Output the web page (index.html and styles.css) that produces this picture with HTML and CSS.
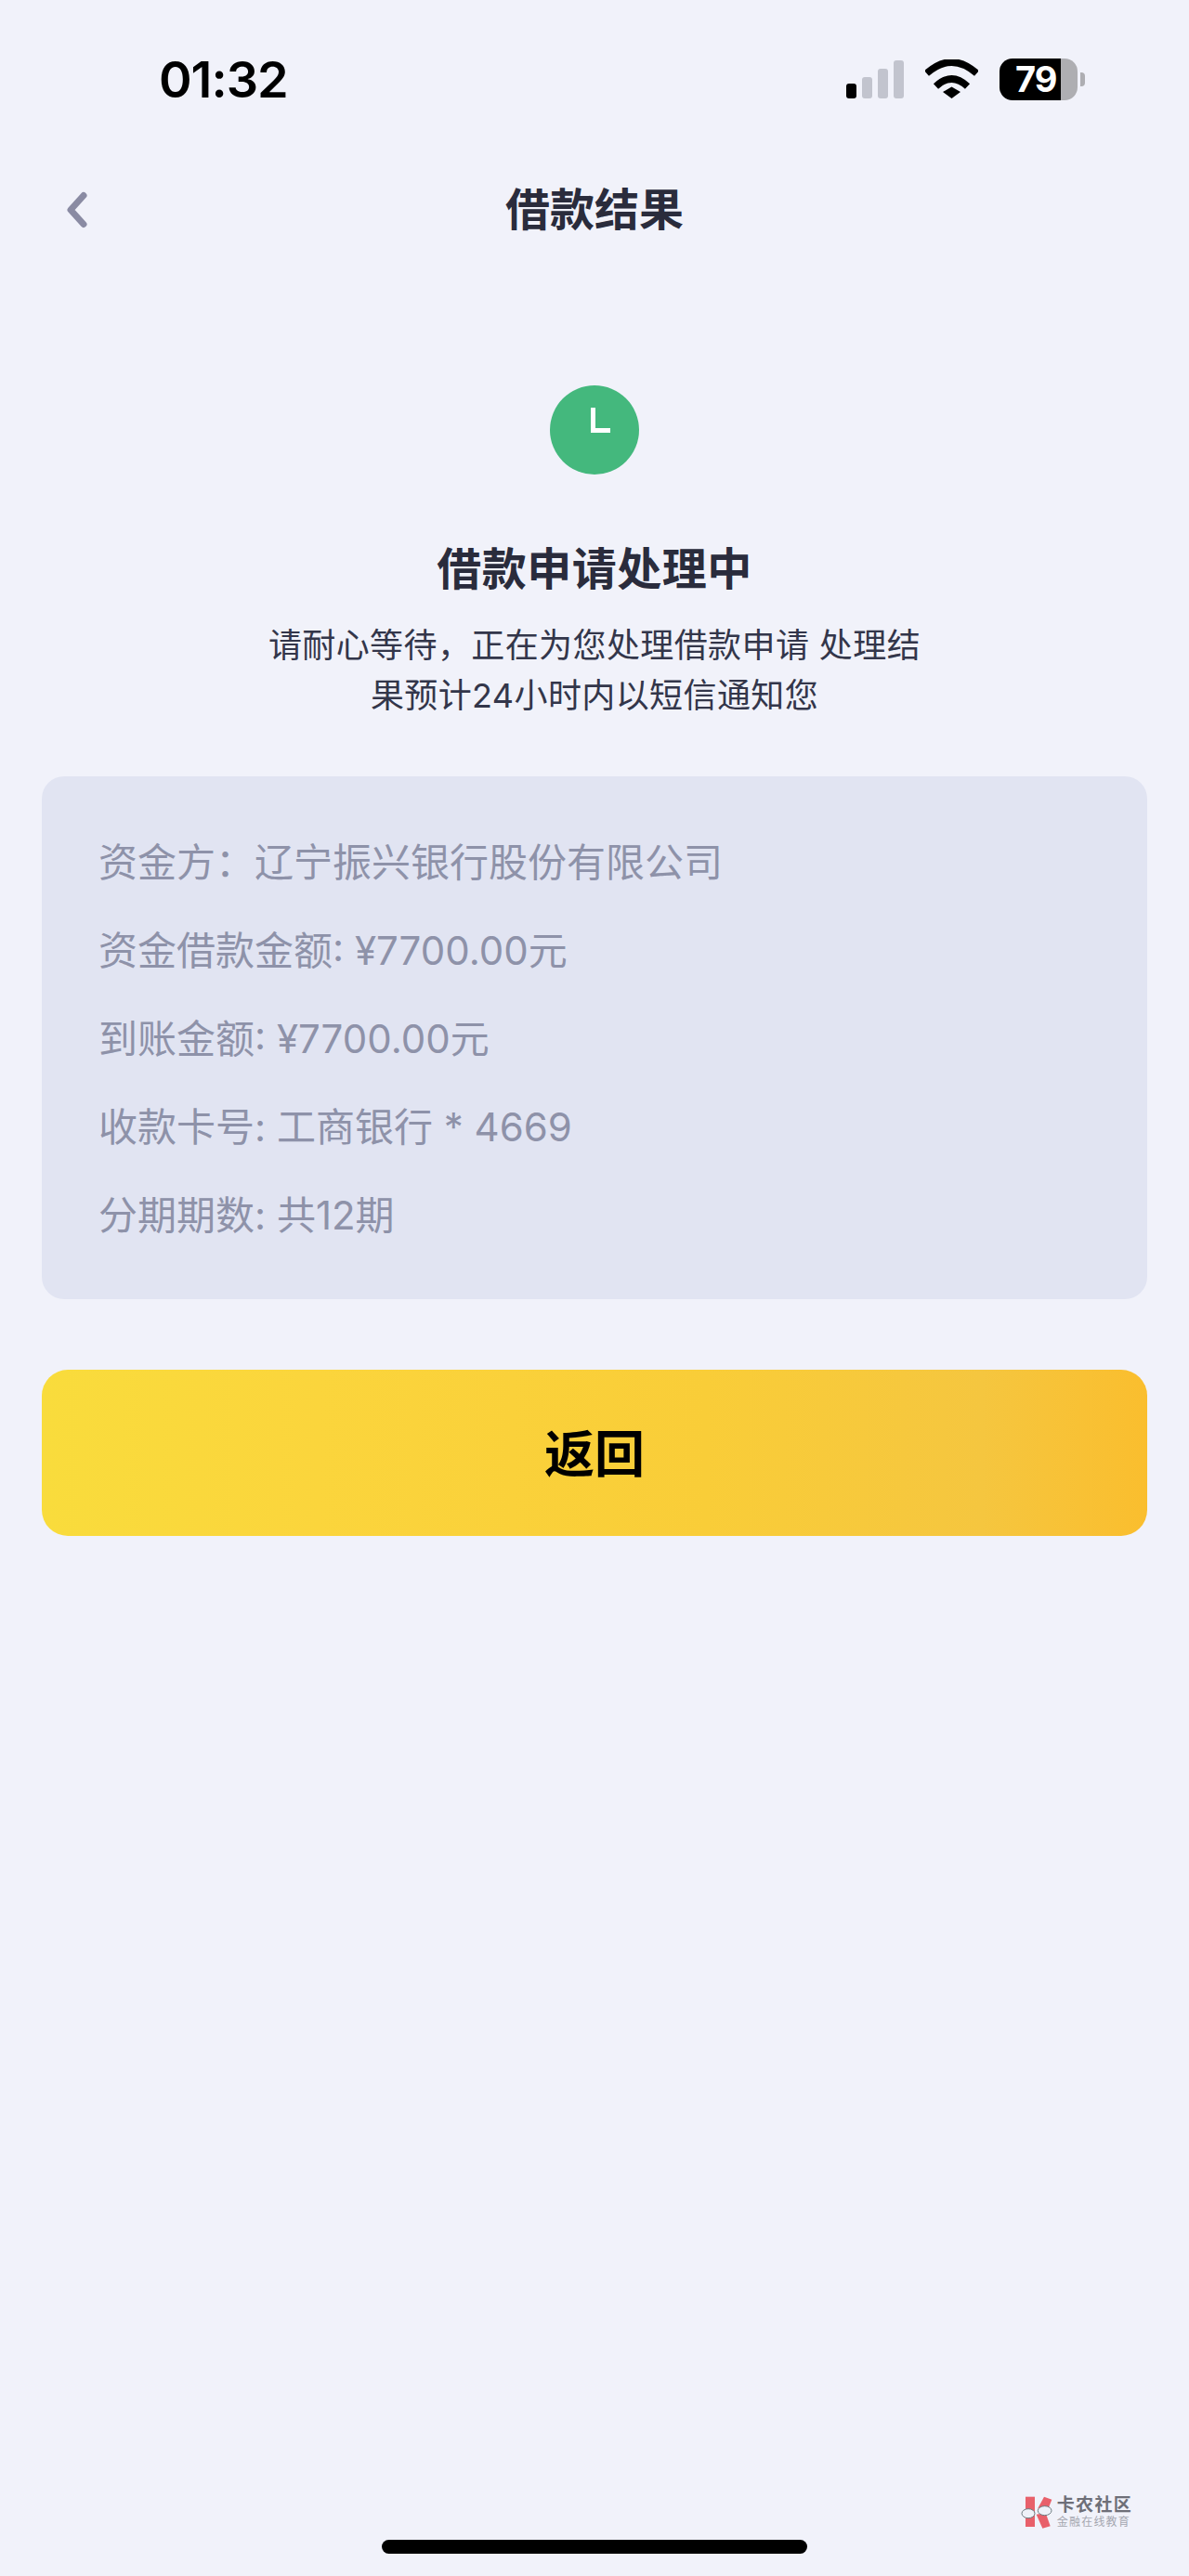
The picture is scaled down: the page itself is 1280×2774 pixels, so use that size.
FILE: index.html
```html
<!DOCTYPE html>
<html lang="zh-CN">
<head>
	<title>借款结果</title>
	<meta charset="UTF-8">
	<link rel="stylesheet" href="styles.css">
</head>
<body>

<header class="status-bar">
	<span class="clock">01:32</span>
	<div class="status-icons">
		<div class="signal">
			<i class="bar bar-1"></i>
			<i class="bar bar-2"></i>
			<i class="bar bar-3"></i>
			<i class="bar bar-4"></i>
		</div>
		<svg class="wifi" width="57" height="42" viewBox="0 0 57 42">
			<path d="M1.5 15 Q28.5 -9 55.5 15" fill="none" stroke="#000" stroke-width="7.5"/>
			<path d="M11.5 29 Q28.5 13 45.5 29" fill="none" stroke="#000" stroke-width="7.5"/>
			<path d="M19 35 L28.5 29.5 L38 35 L28.5 42 Z" fill="#000"/>
		</svg>
		<div class="battery"><span>79</span></div>
		<i class="battery-cap"></i>
	</div>
</header>

<nav class="navbar">
	<svg class="back" width="24" height="40" viewBox="0 0 24 40">
		<path d="M19 4.5 L5 20 L19 35.5" fill="none" stroke="#8a8ba3" stroke-width="7" stroke-linecap="round" stroke-linejoin="round"/>
	</svg>
	<span class="nav-title">借款结果</span>
</nav>

<main class="result">
	<div class="clock-badge"><i class="clock-hands"></i></div>
	<h1>借款申请处理中</h1>
	<p class="result-desc">请耐心等待，正在为您处理借款申请 处理结果预计24小时内以短信通知您</p>

	<ul class="info-card">
		<li>资金方：辽宁振兴银行股份有限公司</li>
		<li>资金借款金额: ¥7700.00元</li>
		<li>到账金额: ¥7700.00元</li>
		<li>收款卡号: 工商银行 * 4669</li>
		<li>分期期数: 共12期</li>
	</ul>

	<button class="back-btn">返回</button>
</main>

<footer class="page-foot">
	<div class="watermark">
		<svg width="36" height="38" viewBox="0 0 108 114">
			<path d="M15 8 H45 V105 H15 Z" fill="#e8606a"/>
			<path d="M55 45 L75 8 L100 17 L85 55 Z" fill="#e8606a"/>
			<path d="M50 65 L80 60 L95 103 L70 110 Z" fill="#e8606a"/>
			<ellipse cx="24" cy="62" rx="21" ry="15" fill="#eef1f8" stroke="#6d7b80" stroke-width="3"/>
			<ellipse cx="77" cy="53" rx="22" ry="15" fill="#eef1f8" stroke="#6d7b80" stroke-width="3"/>
		</svg>
		<div class="watermark-text">
			<strong>卡农社区</strong>
			<small>金融在线教育</small>
		</div>
	</div>
	<div class="home-bar"></div>
</footer>

</body>
</html>
```

FILE: styles.css
```css
* {
	box-sizing: border-box;
}

html, body {
	height: 100%;
}

body {
	margin: 0;
	display: flex;
	flex-direction: column;
	overflow: hidden;
	background-color: #f1f2fa;
	color: #2a2c3c;
	font-family: Inter, "Noto Sans CJK SC", sans-serif;
}

/* status bar */
.status-bar {
	height: 170px;
	flex-shrink: 0;
	display: flex;
	align-items: center;
	justify-content: space-between;
	padding: 0 112px 0 171px;
}

.clock {
	color: #000;
	font-size: 54px;
	font-weight: 600;
	letter-spacing: -1px;
}

.status-icons {
	display: flex;
	align-items: center;
}

.signal {
	display: flex;
	align-items: flex-end;
	gap: 6px;
	height: 41px;
	margin-right: 23px;
}

.bar {
	width: 11px;
	border-radius: 3px;
	background-color: #c2c4ce;
}

.bar-1 {
	height: 16px;
	background-color: #000;
}

.bar-2 {
	height: 23px;
}

.bar-3 {
	height: 32px;
}

.bar-4 {
	height: 41px;
}

.wifi {
	margin-right: 23px;
}

.battery {
	width: 84px;
	height: 45px;
	padding-left: 17px;
	border-radius: 14px;
	background: linear-gradient(90deg, #000 66px, #aeaeb2 66px);
	color: #fff;
	font-size: 38px;
	font-weight: 700;
	line-height: 45px;
	letter-spacing: -1px;
}

.battery-cap {
	width: 5px;
	height: 15px;
	margin-left: 3px;
	border-radius: 0 4px 4px 0;
	background-color: #aeaeb2;
}

/* nav */
.navbar {
	height: 112px;
	flex-shrink: 0;
	display: flex;
	align-items: center;
	justify-content: center;
	position: relative;
}

.back {
	position: absolute;
	left: 71px;
	top: 36px;
}

.nav-title {
	font-size: 48px;
	font-weight: 700;
	line-height: 64px;
}

/* result block */
.result {
	display: flex;
	flex-direction: column;
	align-items: center;
	padding: 133px 45px 0;
}

.clock-badge {
	width: 96px;
	height: 96px;
	border-radius: 50%;
	background-color: #44b87d;
	display: flex;
	justify-content: center;
	padding: 24px 0 0 13px;
}

.clock-hands {
	width: 21px;
	height: 27px;
	border-left: 5px solid #fff;
	border-bottom: 5px solid #fff;
}

h1 {
	margin: 70px 0 0;
	font-size: 48px;
	font-weight: 700;
	line-height: 64px;
	letter-spacing: 0.5px;
}

.result-desc {
	width: 724px;
	margin: 23px 0 0;
	color: #33364a;
	font-size: 36px;
	line-height: 54px;
	letter-spacing: 0.4px;
	text-align: center;
}

.info-card {
	width: 100%;
	margin: 60px 0 0;
	padding: 65px 61px 62px;
	list-style-type: none;
	display: flex;
	flex-direction: column;
	gap: 39px;
	border-radius: 24px;
	background-color: #e1e4f2;
	color: #8e92a9;
	font-size: 42px;
	line-height: 56px;
}

.back-btn {
	width: 100%;
	height: 179px;
	margin-top: 76px;
	padding: 0 0 5px;
	border: none;
	border-radius: 28px;
	background: linear-gradient(90deg, #f9dc3c, #fbd53c 25%, #f9cd38 60%, #f5c63f 85%, #fabe2e);
	color: #000;
	font-family: inherit;
	font-size: 54px;
	font-weight: 700;
}

/* bottom */
.page-foot {
	margin-top: auto;
	display: flex;
	flex-direction: column;
	align-items: center;
	padding-bottom: 24px;
}

.watermark {
	align-self: flex-end;
	display: flex;
	align-items: center;
	gap: 3px;
	padding-right: 61px;
	margin-bottom: 11px;
}

.watermark-text {
	display: flex;
	flex-direction: column;
	color: #6e6f78;
}

.watermark-text strong {
	font-size: 19px;
	line-height: 21px;
	letter-spacing: 1.3px;
}

.watermark-text small {
	color: #a5a7b0;
	font-size: 12px;
	line-height: 15px;
	letter-spacing: 1.2px;
}

.home-bar {
	width: 458px;
	height: 15px;
	border-radius: 8px;
	background-color: #000;
}
```
